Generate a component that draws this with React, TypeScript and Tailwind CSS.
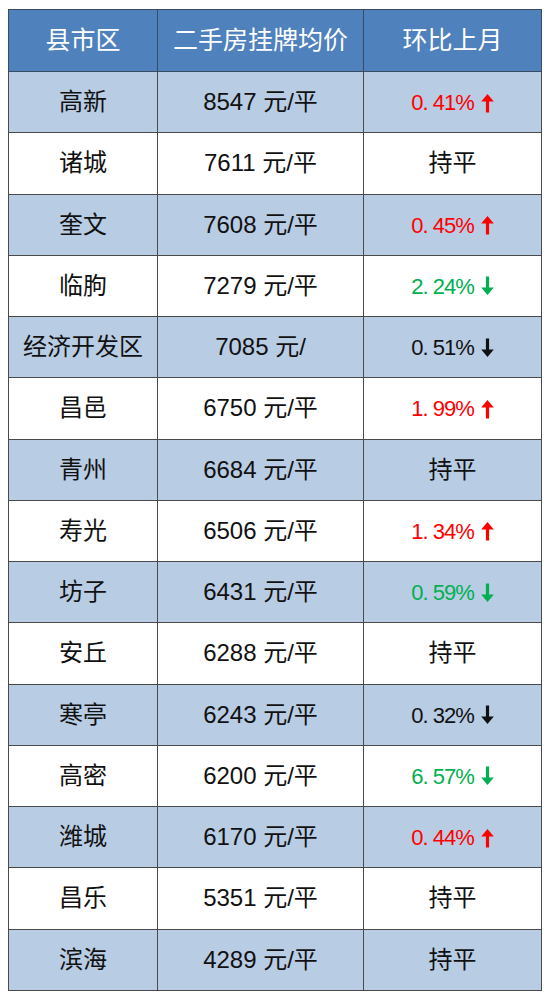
type Trend = "up" | "down" | "flat" | "none";

const rows: [string, string, string, Trend][] = [
  ["高新", "8547 元/平", "0. 41%", "up"],
  ["诸城", "7611 元/平", "持平", "flat"],
  ["奎文", "7608 元/平", "0. 45%", "up"],
  ["临朐", "7279 元/平", "2. 24%", "down"],
  ["经济开发区", "7085 元/", "0. 51%", "none"],
  ["昌邑", "6750 元/平", "1. 99%", "up"],
  ["青州", "6684 元/平", "持平", "flat"],
  ["寿光", "6506 元/平", "1. 34%", "up"],
  ["坊子", "6431 元/平", "0. 59%", "down"],
  ["安丘", "6288 元/平", "持平", "flat"],
  ["寒亭", "6243 元/平", "0. 32%", "none"],
  ["高密", "6200 元/平", "6. 57%", "down"],
  ["潍城", "6170 元/平", "0. 44%", "up"],
  ["昌乐", "5351 元/平", "持平", "flat"],
  ["滨海", "4289 元/平", "持平", "flat"],
];

const Arrow = ({ dir, color }: { dir: "up" | "down"; color: string }) => (
  <svg
    width="13"
    height="20"
    viewBox="0 0 13 20"
    className="ml-[7px]"
    style={{ transform: dir === "down" ? "rotate(180deg)" : undefined }}
  >
    <path d="M6.5 1 L12.8 8.5 L8.1 8.5 L8.1 19.5 L4.9 19.5 L4.9 8.5 L0.2 8.5 Z" fill={color} />
  </svg>
);

const Change = ({ value, trend }: { value: string; trend: Trend }) => {
  if (trend === "flat") return <span>{value}</span>;
  const color = trend === "up" ? "#ff0000" : trend === "down" ? "#00b050" : "#111111";
  return (
    <span className="inline-flex items-center" style={{ color }}>
      <span className="text-[22px] tracking-[-1px]">{value}</span>
      <Arrow dir={trend === "up" ? "up" : "down"} color={color} />
    </span>
  );
};

export default function App() {
  return (
    <div className="bg-white w-[549px] min-h-[1000px] pt-[9px] pl-[8px] font-['Liberation_Sans','Noto_Sans_CJK_SC',sans-serif]">
      <table className="border-collapse border border-[#5a5a5a] w-[533px] table-fixed">
        <colgroup>
          <col className="w-[149px]" />
          <col className="w-[206px]" />
          <col className="w-[178px]" />
        </colgroup>
        <thead>
          <tr className="h-[62px] bg-[#4f81bd] text-white text-[25px]">
            <th className="border border-[#3a4a60] font-normal">县市区</th>
            <th className="border border-[#3a4a60] font-normal">二手房挂牌均价</th>
            <th className="border border-[#3a4a60] font-normal">环比上月</th>
          </tr>
        </thead>
        <tbody>
          {rows.map(([area, price, change, trend], idx) => (
            <tr
              key={idx}
              className={`h-[61.25px] text-[24px] text-[#111] ${idx % 2 === 0 ? "bg-[#b8cce4]" : "bg-white"}`}
            >
              <td className="border border-[#4a4a4a] text-center">{area}</td>
              <td className="border border-[#4a4a4a] text-center">{price}</td>
              <td className="border border-[#4a4a4a] text-center">
                <Change value={change} trend={trend} />
              </td>
            </tr>
          ))}
        </tbody>
      </table>
    </div>
  );
}
